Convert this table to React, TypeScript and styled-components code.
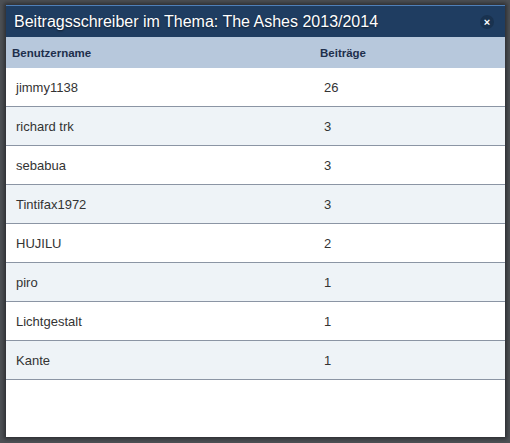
import styled, { createGlobalStyle } from "styled-components";

const GlobalStyle = createGlobalStyle`
  html, body {
    margin: 0;
    padding: 0;
    background: #4e5155;
    height: 100%;
  }
  #root {
    height: 100%;
  }
`;

const posters = [
  { name: "jimmy1138", count: 26 },
  { name: "richard trk", count: 3 },
  { name: "sebabua", count: 3 },
  { name: "Tintifax1972", count: 3 },
  { name: "HUJILU", count: 2 },
  { name: "piro", count: 1 },
  { name: "Lichtgestalt", count: 1 },
  { name: "Kante", count: 1 },
];

const App = () => {
  return (
    <Backdrop>
      <GlobalStyle />
      <Dialog>
        <TitleBar>
          <Title>Beitragsschreiber im Thema: The Ashes 2013/2014</Title>
          <CloseButton>×</CloseButton>
        </TitleBar>
        <Table>
          <colgroup>
            <col style={{ width: "308px" }} />
            <col />
          </colgroup>
          <thead>
            <tr>
              <HeadCell>Benutzername</HeadCell>
              <HeadCell>Beiträge</HeadCell>
            </tr>
          </thead>
          <tbody>
            {posters.map((p, i) => (
              <Row key={p.name} $alt={i % 2 === 1}>
                <Cell>{p.name}</Cell>
                <Cell>{p.count}</Cell>
              </Row>
            ))}
          </tbody>
        </Table>
      </Dialog>
    </Backdrop>
  );
};

const Backdrop = styled.div`
  padding: 5px 0 0 6px;
  height: 100%;
  box-sizing: border-box;
`;

const Dialog = styled.div`
  width: 499px;
  height: 432px;
  background: #fff;
  box-shadow: 0 0 4px 2px rgba(30, 32, 35, 0.7);
  font-family: "Liberation Sans", Arial, sans-serif;
  overflow: hidden;
`;

const TitleBar = styled.div`
  height: 32px;
  box-sizing: border-box;
  background: #1f3d61;
  border-top: 1px solid #4f80b8;
  display: flex;
  align-items: center;
  justify-content: space-between;
  padding: 0 11px 0 8px;
`;

const Title = styled.h1`
  margin: 0;
  font-size: 16px;
  font-weight: normal;
  color: #fff;
  text-shadow: 0 1px 2px rgba(0, 0, 0, 0.6);
`;

const CloseButton = styled.button`
  width: 14px;
  height: 14px;
  border-radius: 50%;
  border: none;
  padding: 0;
  background: #19324f;
  color: #fff;
  font-family: "Liberation Sans", Arial, sans-serif;
  font-weight: bold;
  font-size: 11px;
  line-height: 14px;
  cursor: pointer;
`;

const Table = styled.table`
  width: 100%;
  border-collapse: collapse;
  table-layout: fixed;
`;

const HeadCell = styled.th`
  height: 31px;
  padding: 0 6px;
  background: #b7c8dc;
  color: #1e2f4c;
  font-size: 11.5px;
  font-weight: bold;
  text-align: left;
`;

const Row = styled.tr<{ $alt: boolean }>`
  background: ${(p) => (p.$alt ? "#eef3f7" : "#fff")};
  border-bottom: 1px solid #8b95a4;
`;

const Cell = styled.td`
  height: 38px;
  padding: 0 10px;
  font-size: 13px;
  color: #333;
`;

export default App;
